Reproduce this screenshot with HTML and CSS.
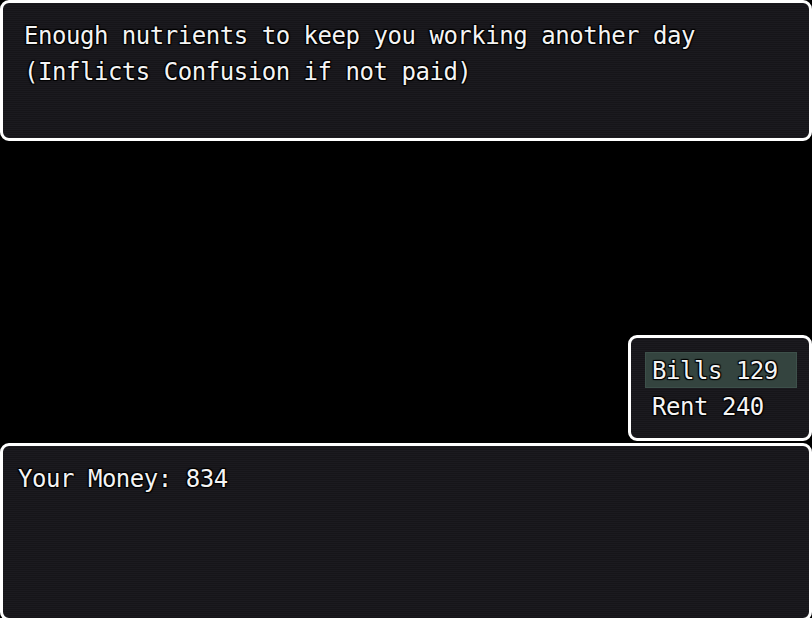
FILE: index.html
```html
<!DOCTYPE html>
<html>
<head>
<meta charset="utf-8">
<link rel="stylesheet" href="styles.css">
</head>
<body>
<div class="screen">
  <div class="window help">
    <p class="line">Enough nutrients to keep you working another day</p>
    <p class="line">(Inflicts Confusion if not paid)</p>
  </div>
  <div class="spacer"></div>
  <div class="window menu">
    <div class="row selected">Bills 129</div>
    <div class="row">Rent 240</div>
  </div>
  <div class="window status">
    <p class="line">Your Money: 834</p>
  </div>
</div>
</body>
</html>
```
FILE: styles.css
```css
html, body {
  margin: 0;
  padding: 0;
  background: #000;
}
.screen {
  width: 812px;
  height: 618px;
  display: flex;
  flex-direction: column;
  overflow: hidden;
  font-family: "DejaVu Sans Mono", "Liberation Mono", monospace;
  font-size: 24px;
  letter-spacing: -0.47px;
  line-height: 36px;
  color: #f4f4f4;
  text-shadow: 0 0 1px #000, 1px 1px 1px #000, -1px -1px 1px #000, 1px -1px 1px #000, -1px 1px 1px #000;
}
.window {
  box-sizing: border-box;
  border: 3px solid #fff;
  border-radius: 9px;
  background: repeating-linear-gradient(to bottom, #1b1a1f 0 1px, #161519 1px 2px);
  flex: none;
}
.line {
  margin: 0;
  white-space: pre;
}
.help {
  height: 141px;
  padding: 15px 21px 0;
}
.spacer {
  flex: 1;
}
.menu {
  align-self: flex-end;
  width: 184px;
  height: 106px;
  padding: 14px 12px 14px 14px;
  margin-bottom: 2px;
}
.row {
  height: 36px;
  padding: 1px 0 0 7px;
  box-sizing: border-box;
  white-space: pre;
}
.selected {
  background: #34443f;
  box-shadow: inset 0 0 0 1px #3d504a;
}
.status {
  height: 178px;
  padding: 15px 15px 0;
  margin-bottom: -3px;
}
```
